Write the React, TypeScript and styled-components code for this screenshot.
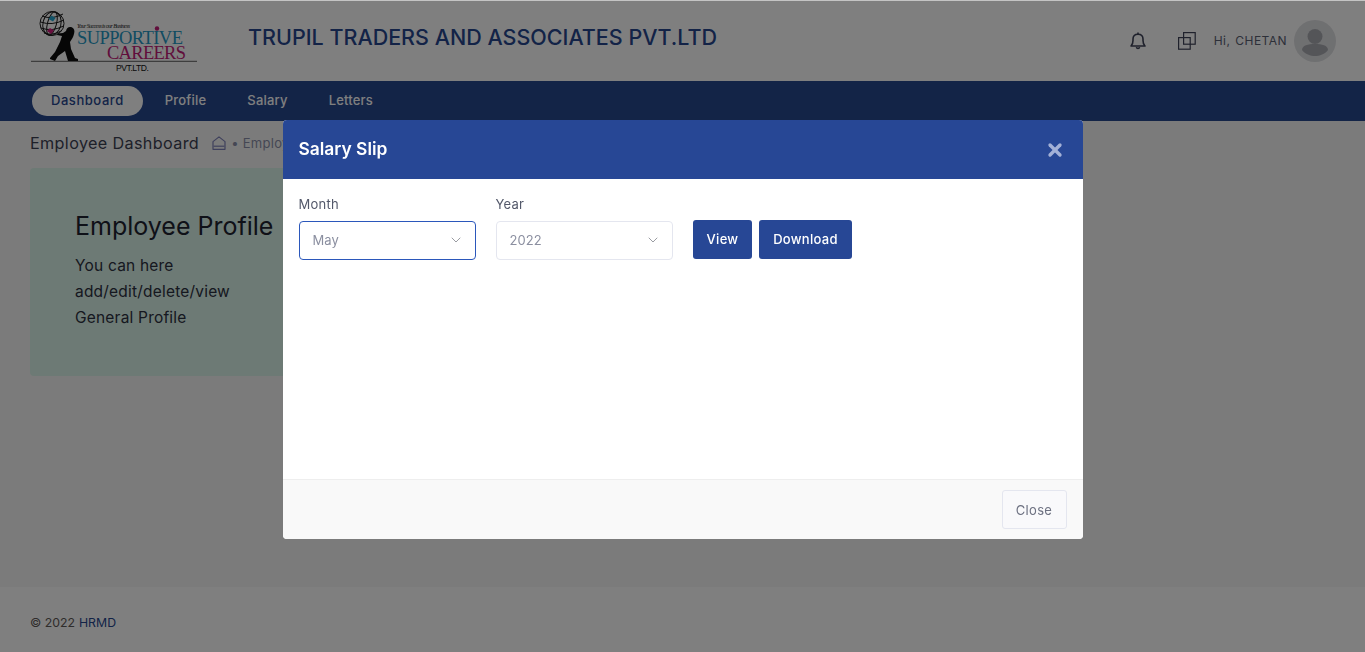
import React from 'react';
import styled, { createGlobalStyle } from 'styled-components';
import { ChevronDown, X } from 'lucide-react';

const Global = createGlobalStyle`
  html, body { margin: 0; padding: 0; height: 100%; }
  body { font-family: Inter, "Open Sans", sans-serif; background: #f7f7f7; overflow: hidden; }
  #root { height: 100%; }
`;

const Page = styled.div`
  height: 652px;
  display: flex;
  flex-direction: column;
`;

const TopBar = styled.header`
  height: 81px;
  background: #ffffff;
  display: flex;
  align-items: center;
  padding: 0 29px 0 30px;
`;

const Logo = styled.svg`
  width: 170px;
  height: 64px;
  flex: none;
`;

const Company = styled.h1`
  margin: 0 0 7px 48px;
  font-size: 21.5px;
  line-height: 30px;
  font-weight: 500;
  color: #27478f;
  flex: 1;
`;

const HeaderIcon = styled.svg<{ $gap: number }>`
  display: block;
  flex: none;
  color: #3f4358;
  margin-right: ${p => p.$gap}px;
`;

const Greeting = styled.span`
  font-size: 12px;
  font-weight: 400;
  letter-spacing: 0.45px;
  color: #5a6072;
  display: flex;
  gap: 5px;
  margin-right: 7px;
`;

const Avatar = styled.span`
  width: 42px;
  height: 42px;
  border-radius: 50%;
  background: #dfe0e3;
  display: flex;
  align-items: center;
  justify-content: center;
`;

const NavBar = styled.nav`
  height: 40px;
  background: #27488f;
  display: flex;
  align-items: center;
  padding-left: 32px;
  gap: 3px;
`;

const NavItem = styled.a<{ $active?: boolean }>`
  font-size: 13px;
  font-weight: 500;
  letter-spacing: ${p => (p.$active ? '0.55px' : '0.2px')};
  height: 30px;
  display: flex;
  align-items: center;
  border-radius: 15px;
  padding: 0 19px 2px;
  box-sizing: border-box;
  background: ${p => (p.$active ? '#ffffff' : 'transparent')};
  color: ${p => (p.$active ? '#27478f' : '#ffffff')};
`;

const Content = styled.main`
  flex: 1;
  padding: 11px 30px 0;
`;

const Crumbs = styled.div`
  display: flex;
  align-items: center;
  height: 22px;
  margin-bottom: 14px;
`;

const CrumbTitle = styled.span`
  font-size: 16.2px;
  font-weight: 400;
  letter-spacing: 0.35px;
  color: #3c4153;
  margin-right: 13px;
`;

const CrumbLink = styled.span`
  font-size: 13px;
  color: #8a8fa8;
  margin-left: 5px;
  letter-spacing: 0.3px;
`;

const CrumbHome = styled.svg`
  display: block;
  flex: none;
  color: #7d80b8;
`;

const Card = styled.section`
  width: 300px;
  height: 208px;
  box-sizing: border-box;
  background: #dbf4ea;
  border-radius: 4px;
  padding: 41px 45px;
`;

const CardTitle = styled.h2`
  margin: 0 0 10px;
  font-size: 25px;
  line-height: 34px;
  font-weight: 400;
  color: #1e2230;
  white-space: nowrap;
`;

const CardText = styled.p`
  margin: 0;
  font-size: 15.5px;
  letter-spacing: 0.2px;
  line-height: 26px;
  color: #2c3040;
  white-space: nowrap;
`;

const Footer = styled.footer`
  height: 65px;
  box-sizing: border-box;
  background: #ffffff;
  display: flex;
  align-items: center;
  padding: 5px 0 0 30px;
  font-size: 12.3px;
  color: #5f5a58;
  gap: 4px;
`;

const FooterBrand = styled.span`
  color: #27478f;
`;

const Backdrop = styled.div`
  position: fixed;
  inset: 0;
  box-sizing: border-box;
  border-top: 1px solid #c4c4c4;
  background: rgba(0, 0, 0, 0.5);
  display: flex;
  justify-content: center;
  align-items: flex-start;
  padding-top: 119px;
`;

const Modal = styled.div`
  width: 800px;
  background: #ffffff;
  border-radius: 4px;
  overflow: hidden;
`;

const ModalHead = styled.div`
  height: 59px;
  background: #274795;
  display: flex;
  align-items: center;
  justify-content: space-between;
  padding: 0 18px 0 16px;
`;

const ModalTitle = styled.h3`
  margin: 0 0 2px;
  font-size: 17.4px;
  font-weight: 600;
  color: #ffffff;
`;

const CloseX = styled.span`
  display: flex;
  color: #a3b1d7;
`;

const ModalBody = styled.div`
  height: 300px;
  box-sizing: border-box;
  padding: 16px;
  display: flex;
  gap: 20px;
  align-items: flex-start;
`;

const Field = styled.div`
  width: 177px;
`;

const FieldLabel = styled.div`
  font-size: 13px;
  letter-spacing: 0.25px;
  line-height: 19px;
  color: #53586a;
  margin-bottom: 7px;
`;

const Select = styled.div<{ $focus?: boolean }>`
  height: 39px;
  box-sizing: border-box;
  border: 1px solid ${p => (p.$focus ? '#2b57bb' : '#e4e6ef')};
  border-radius: 4px;
  padding: 0 11px 1px 13px;
  display: flex;
  align-items: center;
  justify-content: space-between;
  font-size: 13px;
  letter-spacing: 0.1px;
  color: #8b8fa0;
`;

const Chevron = styled.span`
  display: flex;
  color: #75777f;
`;

const Actions = styled.div`
  display: flex;
  gap: 7px;
  padding-top: 25px;
`;

const PrimaryButton = styled.button<{ $width: number }>`
  height: 39px;
  width: ${p => p.$width}px;
  box-sizing: border-box;
  border: 0;
  border-radius: 3px;
  background: #274795;
  color: #ffffff;
  font: 500 13px Inter, sans-serif;
  letter-spacing: 0.3px;
  padding: 0 0 2px 1px;
`;

const ModalFoot = styled.div`
  height: 60px;
  box-sizing: border-box;
  background: #f9f9f9;
  border-top: 1px solid #eeeeee;
  display: flex;
  align-items: center;
  justify-content: flex-end;
  padding: 0 16px;
`;

const GhostButton = styled.button`
  width: 65px;
  height: 39px;
  box-sizing: border-box;
  border: 1px solid #e4e6ef;
  border-radius: 3px;
  background: #f9f9fb;
  color: #6c7080;
  font: 400 13px Inter, sans-serif;
  letter-spacing: 0.3px;
  padding: 0;
`;

const LogoMark = () => (
  <Logo viewBox="30 10 170 64">
    <circle cx="52" cy="24.5" r="12" fill="#ffffff" stroke="#1a1a1a" strokeWidth="1" />
    <g stroke="#1a1a1a" strokeWidth="1" fill="none">
      <ellipse cx="52" cy="24.5" rx="4.5" ry="12" transform="rotate(15 52 24.5)" />
      <ellipse cx="52" cy="24.5" rx="9" ry="12" transform="rotate(15 52 24.5)" />
      <path d="M42 17 Q52 21 63 15 M40.5 23 Q52 27 64 21 M41 29 Q52 33 63.5 27 M44 34 Q52 37 61 32" />
    </g>
    <polygon points="48.5,20 51.5,16.5 55.5,19 53,22.5" fill="#22a6d0" />
    <polygon points="47,32 50,29 54,31.5 51,35" fill="#d01c7c" />
    <path d="M70 28 C72.5 28 74.6 30 74.4 32.6 C74.2 35 73.6 37 72.5 39 L70 43 L71 50 L75 59 L78 60 L78 62 L68 62 L65 52 L58 57 L55 62 L50 60 L50 59 L55 53 L60 43 L62 37 L57 36 L57.5 34.5 L63 34 L66 32 C66.5 29.5 68 28 70 28 Z" fill="#0d0d0d" />
    <line x1="31" y1="62.3" x2="197" y2="62.3" stroke="#333" strokeWidth="0.8" />
    <text x="77" y="29" fontFamily="Liberation Serif, serif" fontStyle="italic" fontSize="6" fill="#222" textLength="53">Your Success is our Business</text>
    <text x="77" y="45.3" fontFamily="Liberation Serif, serif" fontSize="18.5" fill="#2498c4" textLength="106">SUPPORTIVE</text>
    <text x="107" y="60" fontFamily="Liberation Serif, serif" fontSize="18.5" fill="#c21c78" textLength="79">CAREERS</text>
    <circle cx="157" cy="29.5" r="2.2" fill="#c21c78" />
    <text x="116" y="71.5" fontFamily="Liberation Sans, sans-serif" fontSize="8.6" fill="#111" textLength="33">PVT.LTD.</text>
  </Logo>
);

const chevron = <Chevron><ChevronDown size={16} strokeWidth={1.1} /></Chevron>;

export default function App() {
  return (
    <>
      <Global />
      <Page>
        <TopBar>
          <LogoMark />
          <Company>TRUPIL TRADERS AND ASSOCIATES PVT.LTD</Company>
          <HeaderIcon $gap={32} width="16" height="18" viewBox="0 0 16 18" fill="none" stroke="currentColor" strokeWidth="1.6">
            <path d="M1 14 C2.6 12.6 3 11 3 8.5 V7 C3 4.2 5 2.2 8 2.2 C11 2.2 13 4.2 13 7 V8.5 C13 11 13.4 12.6 15 14 Z" strokeLinejoin="round" />
            <path d="M8 0.4 V2.2" />
            <path d="M6.4 15.2 C6.8 17 9.2 17 9.6 15.2" />
          </HeaderIcon>
          <HeaderIcon $gap={18} width="18" height="18" viewBox="0 0 18 18" fill="none" stroke="currentColor" strokeWidth="1.2">
            <rect x="5.6" y="0.6" width="11.6" height="11.6" />
            <rect x="0.6" y="5.6" width="11.6" height="11.6" />
          </HeaderIcon>
          <Greeting><span>Hi,</span><span>CHETAN</span></Greeting>
          <Avatar>
            <svg width="30" height="30" viewBox="0 0 30 30">
              <circle cx="15" cy="10.5" r="7.5" fill="#a9abb1" />
              <path d="M2 24 C2 19.5 8 18 15 18 C22 18 28 19.5 28 24 C25 28 19.5 30 15 30 C10.5 30 5 28 2 24 Z" fill="#a9abb1" />
            </svg>
          </Avatar>
        </TopBar>
        <NavBar>
          <NavItem $active>Dashboard</NavItem>
          <NavItem>Profile</NavItem>
          <NavItem>Salary</NavItem>
          <NavItem>Letters</NavItem>
        </NavBar>
        <Content>
          <Crumbs>
            <CrumbTitle>Employee Dashboard</CrumbTitle>
            <CrumbHome width="14" height="14" viewBox="0 0 14 14" fill="none" stroke="currentColor" strokeWidth="1.2">
              <path d="M1 5.6 L7 0.9 L13 5.6 V13.3 H1 Z" strokeLinejoin="round" />
              <path d="M1.5 10.2 H12.5" />
            </CrumbHome>
            <CrumbLink>• Employee</CrumbLink>
          </Crumbs>
          <Card>
            <CardTitle>Employee Profile</CardTitle>
            <CardText>You can here<br />add/edit/delete/view<br />General Profile</CardText>
          </Card>
        </Content>
        <Footer>© 2022 <FooterBrand>HRMD</FooterBrand></Footer>
      </Page>
      <Backdrop>
        <Modal>
          <ModalHead>
            <ModalTitle>Salary Slip</ModalTitle>
            <CloseX><X size={20} strokeWidth={4} /></CloseX>
          </ModalHead>
          <ModalBody>
            <Field>
              <FieldLabel>Month</FieldLabel>
              <Select $focus>May{chevron}</Select>
            </Field>
            <Field>
              <FieldLabel>Year</FieldLabel>
              <Select>2022{chevron}</Select>
            </Field>
            <Actions>
              <PrimaryButton $width={59}>View</PrimaryButton>
              <PrimaryButton $width={93}>Download</PrimaryButton>
            </Actions>
          </ModalBody>
          <ModalFoot><GhostButton>Close</GhostButton></ModalFoot>
        </Modal>
      </Backdrop>
    </>
  );
}
